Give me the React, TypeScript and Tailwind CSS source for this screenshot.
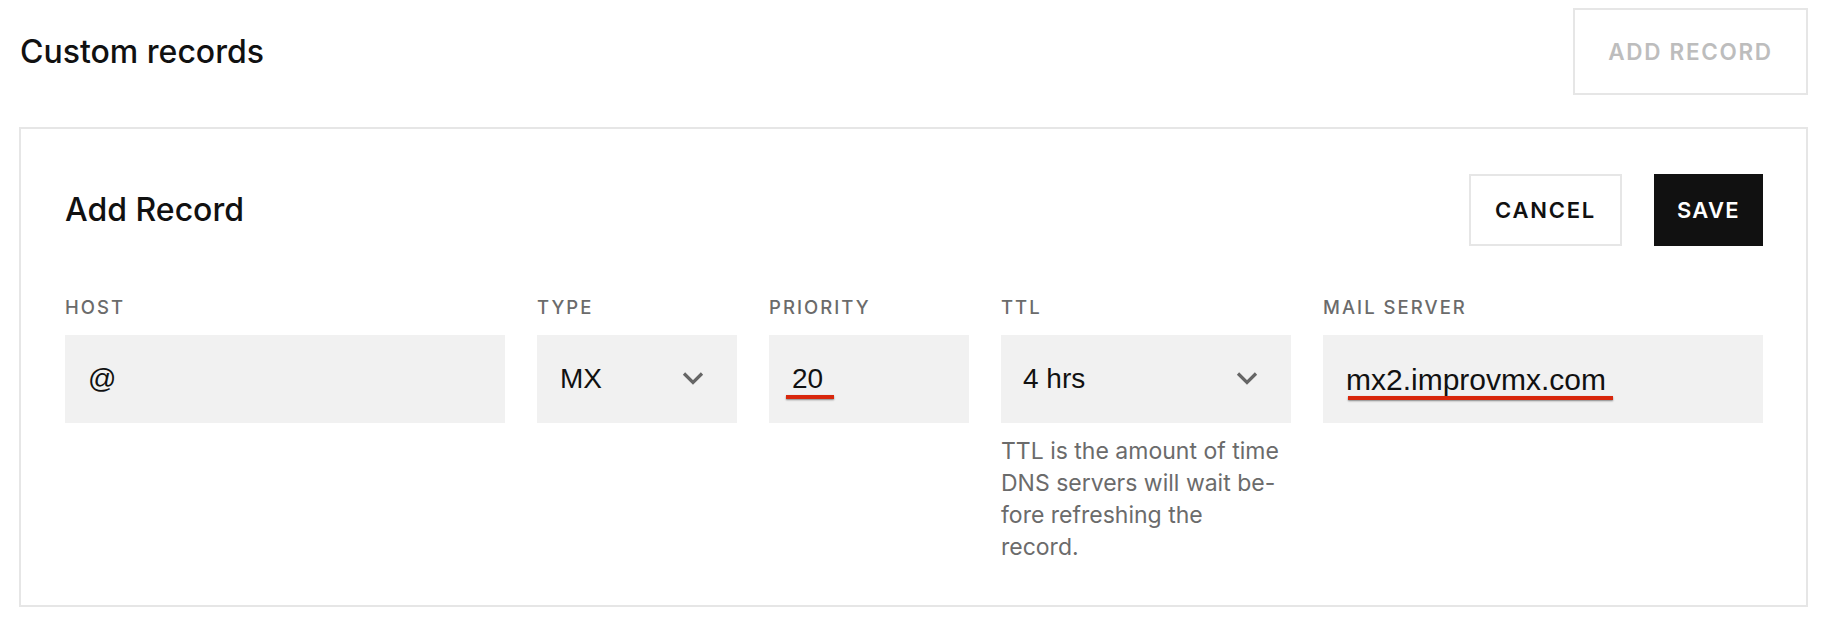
import React from "react";

const inter = { fontFamily: "Inter, 'Noto Sans', sans-serif" };

function Chevron() {
  return (
    <svg width="22" height="16" viewBox="0 0 22 16" fill="none" className="shrink-0">
      <path d="M2 2.5 L11 11.5 L20 2.5" stroke="#666666" strokeWidth="3.2" strokeLinecap="butt" strokeLinejoin="miter" />
    </svg>
  );
}

function Label({ children }: { children: React.ReactNode }) {
  return (
    <div className="font-['Inter',sans-serif] text-[18.5px] leading-[24px] font-medium tracking-[0.11em] text-[#6b6b6b] mb-[16px]">
      {children}
    </div>
  );
}

function Field({ children, className = "" }: { children: React.ReactNode; className?: string }) {
  return (
    <div className={"relative h-[88px] bg-[#f1f1f1] flex items-center pl-[23px] pr-[33px] font-['Liberation_Sans',Arial,sans-serif] text-[28px] text-[#111] " + className}>
      {children}
    </div>
  );
}

export default function App() {
  return (
    <div className="bg-white w-[1822px] h-[622px] pl-[19px] pr-[14px] font-['Inter',sans-serif]" style={inter}>
      <div className="flex items-center justify-between pt-[8px]">
        <h1 className="ml-[1px] text-[32px] font-medium text-[#111] leading-none">Custom records</h1>
        <button className="w-[235px] h-[87px] border-2 border-[#e6e6e6] text-[22.5px] font-semibold tracking-[0.075em] text-[#bdbdbd]">
          ADD RECORD
        </button>
      </div>

      <div className="mt-[32px] border-2 border-[#e6e6e6] pl-[44px] pr-[43px] pt-[45px] pb-[42px]">
        <div className="flex items-center justify-between">
          <h2 className="text-[32px] font-medium text-[#111] leading-none">Add Record</h2>
          <div className="flex gap-[32px]">
            <button className="w-[153px] h-[72px] border-2 border-[#e6e6e6] text-[22px] font-semibold tracking-[0.08em] text-[#111]">
              CANCEL
            </button>
            <button className="w-[109px] h-[72px] bg-[#111] text-[22px] font-semibold tracking-[0.06em] text-white">
              SAVE
            </button>
          </div>
        </div>

        <div className="mt-[49px] grid grid-cols-[440px_200px_200px_290px_440px] gap-x-[32px]">
          <div>
            <Label>HOST</Label>
            <Field>@</Field>
          </div>
          <div>
            <Label>TYPE</Label>
            <Field className="justify-between">
              <span>MX</span>
              <Chevron />
            </Field>
          </div>
          <div>
            <Label>PRIORITY</Label>
            <Field>
              <span>20</span>
              <div className="absolute left-[17px] top-[60px] w-[48px] h-[4px] bg-[#d8270c] shadow-[0_1px_2px_rgba(0,0,0,0.45)]" />
            </Field>
          </div>
          <div>
            <Label>TTL</Label>
            <Field className="justify-between !pl-[22px]">
              <span>4 hrs</span>
              <Chevron />
            </Field>
            <p className="mt-[12px] text-[23px] leading-[32px] text-[#6b6b6b] font-['Inter',sans-serif]">
              TTL is the amount of time
              <br />
              DNS servers will wait be-
              <br />
              fore refreshing the
              <br />
              record.
            </p>
          </div>
          <div>
            <Label>MAIL SERVER</Label>
            <Field>
              <span className="text-[30px]">mx2.improvmx.com</span>
              <div className="absolute left-[25px] top-[61px] w-[265px] h-[4px] bg-[#d8270c] shadow-[0_1px_2px_rgba(0,0,0,0.45)]" />
            </Field>
          </div>
        </div>
      </div>
    </div>
  );
}
